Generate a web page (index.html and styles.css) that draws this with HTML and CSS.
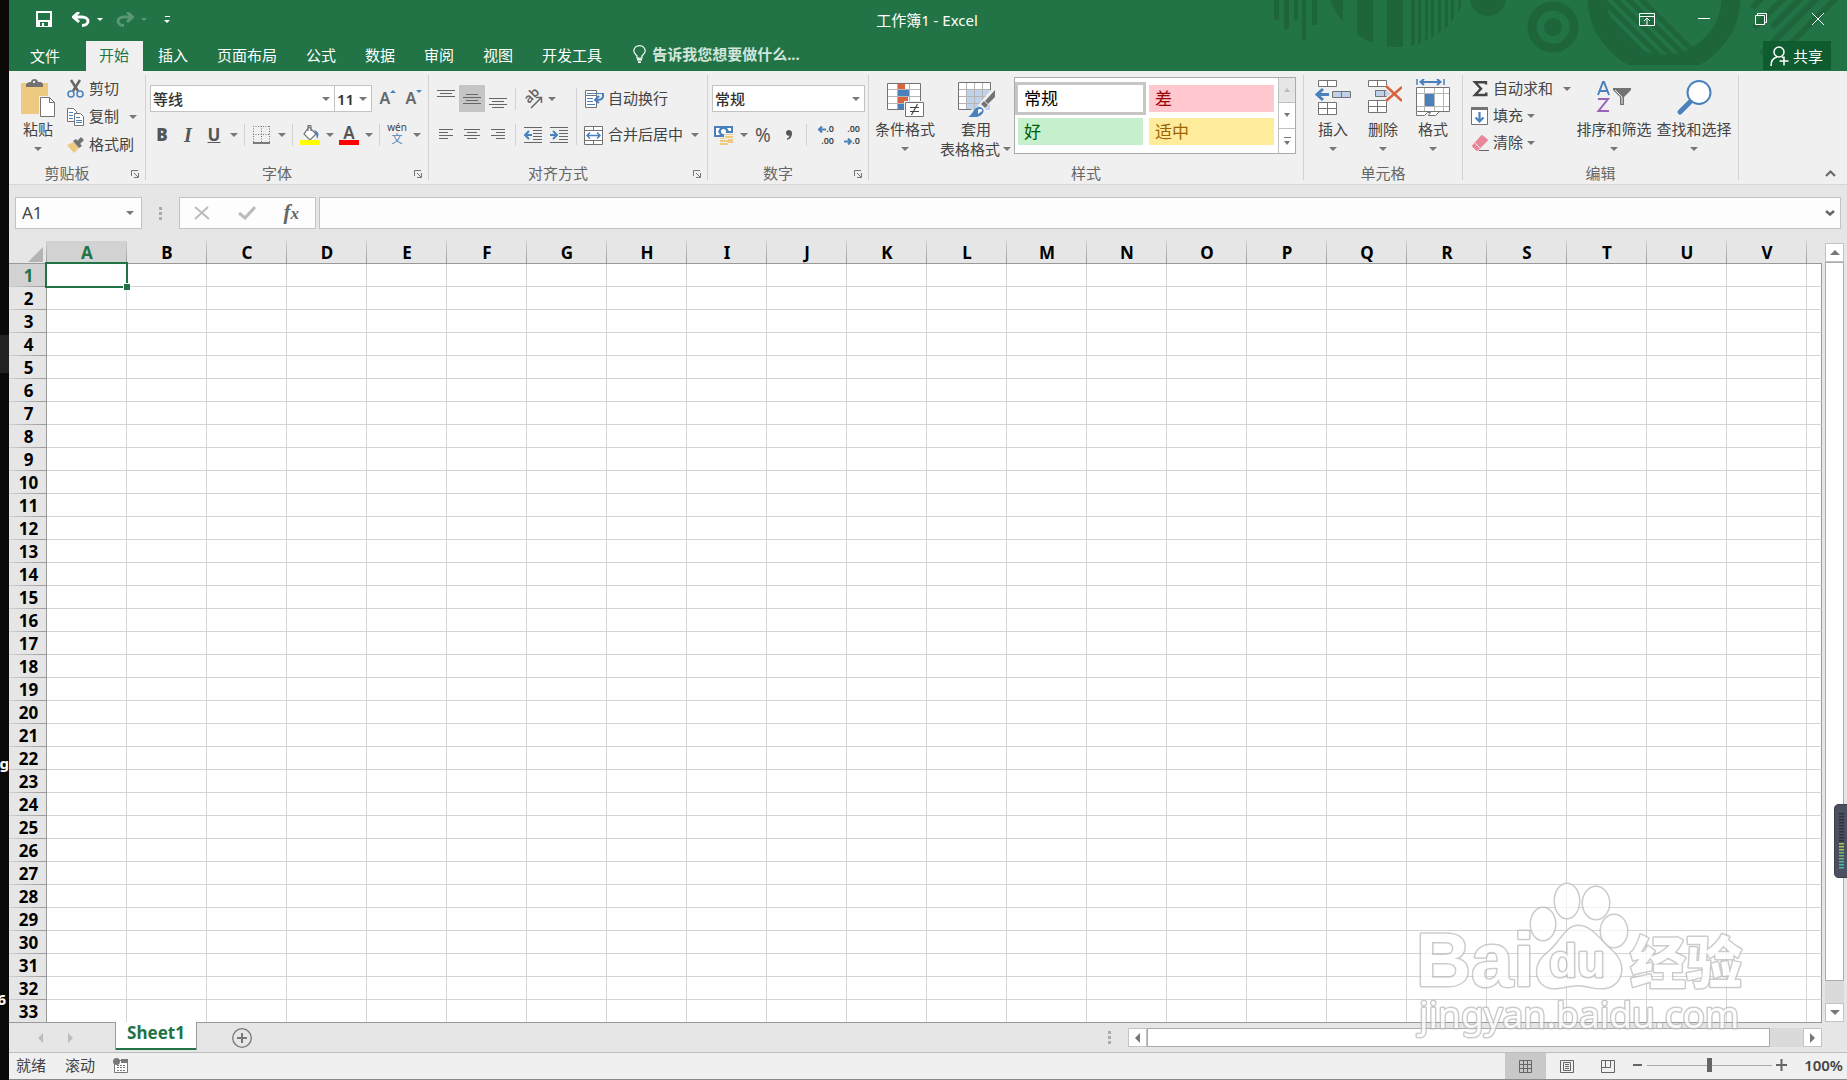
FILE: index.html
```html
<!DOCTYPE html>
<html lang="zh-CN">
<head>
<meta charset="utf-8">
<title>工作簿1 - Excel</title>
<link rel="stylesheet" href="styles.css">
</head>
<body>
<div class="desktop" aria-hidden="true">
  <span class="desktop-block"></span>
  <span class="desktop-char char-g">g</span>
  <span class="desktop-char char-6">6</span>
</div>
<div class="app">
  <header class="header">
    <svg class="deco" width="577" height="71" viewBox="1270 0 577 71" fill="#1e653c" aria-hidden="true">
      <defs>
        <clipPath id="disc"><circle cx="1397" cy="-24" r="71"/></clipPath>
        <clipPath id="inner"><circle cx="1664" cy="-3" r="60"/></clipPath>
        <clipPath id="flat"><rect x="1580" y="0" width="170" height="65"/></clipPath>
      </defs>
      <path d="M1274 0h5v20h-5zM1284 0h5v29h-5zM1294 0h4v20h-4zM1302 0h4v40h-4zM1312 0h5v25h-5z"/>
      <path clip-path="url(#disc)" d="M1328 0h15v48h-15zM1357 0h16v48h-16zM1387 0h16v48h-16zM1411 0h4v48h-4zM1418 0h3v48h-3zM1425 0h3v48h-3zM1431 0h3v48h-3zM1438 0h3v48h-3zM1445 0h3v48h-3zM1451 0h3v48h-3zM1458 0h3v48h-3z"/>
      <circle cx="1488" cy="-2" r="18"/>
      <circle cx="1553" cy="27" r="21" fill="none" stroke="#1e653c" stroke-width="9"/>
      <circle cx="1553" cy="27" r="9"/>
      <circle clip-path="url(#flat)" cx="1664" cy="-3" r="67" fill="none" stroke="#1e653c" stroke-width="19"/>
      <path clip-path="url(#inner)" fill="none" stroke="#1e653c" stroke-width="5" d="M1585 -5l70 70M1598 -5l70 70M1611 -5l70 70M1624 -5l70 70M1637 -5l70 70"/>
      <path fill="none" stroke="#1e653c" stroke-width="6" d="M1752 8l14-14M1754 28l34-34M1772 27l33-33M1761 54l62-62M1781 53l62-62"/>
    </svg>
    <div class="titlebar">
      <div class="qat">
        <button class="qat-btn save" aria-label="保存"><svg width="16" height="16" viewBox="0 0 16 16"><path fill="#fff" fill-rule="evenodd" d="M0 0h16v16H0zM2 2v7h12V2zM4 11v4h2v-3h2v3h4v-4z"/></svg></button>
        <button class="qat-btn undo" aria-label="撤消"><svg width="18" height="15" viewBox="0 0 18 15"><path d="M7 0L1.500 5 7 10M2 5h8c8 0 8 8.500 0 8.500" fill="none" stroke="#fff" stroke-width="3"/></svg><i class="caret"></i></button>
        <button class="qat-btn redo" aria-label="恢复"><svg width="18" height="15" viewBox="0 0 18 15"><path d="M11 0l5.500 5-5.500 5M16 5H8C0 5 0 13.500 8 13.500" fill="none" stroke="#fff" stroke-width="3"/></svg><i class="caret"></i></button>
        <button class="qat-btn more" aria-label="自定义快速访问工具栏"><i class="caret"></i></button>
      </div>
      <div class="title">工作簿1 - Excel</div>
      <div class="win-buttons">
        <button aria-label="功能区显示选项"><svg width="16" height="13" viewBox="0 0 16 13" fill="none" stroke="#fff"><path d="M.5.5h15v12H.5zM0 3.500h16M8 12V5M5 8l3-3 3 3"/></svg></button>
        <button aria-label="最小化"><svg width="12" height="12" viewBox="0 0 12 12" stroke="#fff"><path d="M0 5.500h12"/></svg></button>
        <button aria-label="向下还原"><svg width="12" height="12" viewBox="0 0 12 12" fill="none" stroke="#fff"><path d="M.5 2.500h9v9h-9zM2.500 2V.5h9v9H10"/></svg></button>
        <button aria-label="关闭"><svg width="12" height="12" viewBox="0 0 12 12" stroke="#fff"><path d="M0 0l12 12M12 0L0 12"/></svg></button>
      </div>
    </div>
    <nav class="tabs">
      <button class="tab file">文件</button>
      <button class="tab active">开始</button>
      <button class="tab">插入</button>
      <button class="tab">页面布局</button>
      <button class="tab">公式</button>
      <button class="tab">数据</button>
      <button class="tab">审阅</button>
      <button class="tab">视图</button>
      <button class="tab">开发工具</button>
      <button class="tell-me"><svg width="13" height="18" viewBox="0 0 13 18" fill="none" stroke="#fff"><path stroke-width="1.200" d="M4 13V11C2 9 .8 8 .8 5.800a5.700 5.200 0 0 1 11.400 0C12.200 8 11 9 9 11v2z"/><path stroke-width="2" d="M4 14.500h5M5 17.300h3"/></svg><span>告诉我您想要做什么...</span></button>
      <button class="share"><svg width="19" height="20" viewBox="0 0 19 20" fill="none" stroke="#fff" stroke-width="1.500"><circle cx="9" cy="6" r="5"/><path d="M1 20c0-5 2-8 6-9M12 11l2 1M9.500 15h9M14 10.500v9"/></svg><span>共享</span></button>
    </nav>
  </header>

  <section class="ribbon">
    <div class="group g-clip">
      <div class="body">
        <button class="big"><svg class="ico" width="36" height="38" viewBox="0 0 36 38"><path fill="#eec981" d="M1 4h27v31H1z"/><path fill="#737373" d="M6 8V5l3-2h2c0-4 7-4 7 0h3l2 2v3z"/><path fill="#f0f0f0" d="M13 2h2v2h-2z"/><path fill="#fff" stroke="#f0f0f0" stroke-width="3" d="M20.500 18.500h9l5 5v14h-14z"/><path fill="#fff" stroke="#737373" d="M20.500 18.500h9l5 5v14h-14zM29.500 18.500v5h5"/></svg><span>粘贴</span><i class="caret"></i></button>
        <div class="list">
          <button><svg width="18" height="20" viewBox="0 0 18 20" fill="none"><path stroke="#666" stroke-width="2.500" d="M4 1l7 11M13 1L6 12"/><g stroke="#4a80bb" stroke-width="1.500"><circle cx="4" cy="15" r="3"/><circle cx="13" cy="15" r="3"/></g></svg><span>剪切</span></button>
          <button class="far"><svg width="18" height="20" viewBox="0 0 18 20" fill="#fff" stroke="#737373"><path d="M.5 1.500h6l3 3v10h-9z"/><path d="M7.500 6.500h6l3 3v9h-9z"/><path stroke="#4a80bb" d="M2 5.500h4M2 8.500h4M2 11.500h4M9 10.500h4M9 13.500h6M9 15.500h6"/></svg><span>复制</span><i class="caret"></i></button>
          <button><svg width="18" height="18" viewBox="0 0 18 18"><path fill="#eec981" d="M0 9l7-3 5 6-5 5z"/><path fill="#737373" d="M6 5l3-2 6 7-3 2zM10 5l4-4 3 3-4 4z"/></svg><span>格式刷</span></button>
        </div>
      </div>
      <div class="caption"><span>剪贴板</span><button class="launch" aria-label="剪贴板设置"><svg width="8" height="8" viewBox="0 0 8 8" fill="none" stroke="#777"><path d="M.5 6V.5H7M3 3l4 4M7.500 3v4.500H3"/></svg></button></div>
    </div>
    <span class="vsep"></span>

    <div class="group g-font">
      <div class="body rows">
        <div class="row top">
          <label class="combo font-name"><select aria-label="字体"><option>等线</option></select><i class="caret"></i></label><label class="combo font-size"><select aria-label="字号"><option>11</option></select><i class="caret"></i></label>
          <button class="tool sizer" aria-label="增大字号"><span>A</span><svg width="6" height="3" viewBox="0 0 6 3"><path fill="#4a80bb" d="M0 3l3-3 3 3z"/></svg></button>
          <button class="tool sizer" aria-label="减小字号"><span>A</span><svg width="6" height="3" viewBox="0 0 6 3"><path fill="#4a80bb" d="M0 0h6L3 3z"/></svg></button>
        </div>
        <div class="row tools">
          <button class="tool letter"><b>B</b></button>
          <button class="tool letter italic"><i>I</i></button>
          <button class="tool letter"><u>U</u></button>
          <button class="drop" aria-label="下划线"><i class="caret"></i></button>
          <span class="sep"></span>
          <button class="tool" aria-label="边框"><svg width="18" height="18" viewBox="0 0 18 18" fill="none" stroke="#777"><path stroke-dasharray="1 1.500" d="M.5 0v16M8.500 0v16M16.500 0v16M0 .5h17M0 8.500h17"/><path d="M0 17h17" stroke-width="1.500" stroke="#555"/></svg></button>
          <button class="drop" aria-label="边框选项"><i class="caret"></i></button>
          <span class="sep"></span>
          <button class="tool" aria-label="填充颜色"><svg width="20" height="20" viewBox="0 0 20 20"><path fill="#fff" stroke="#737373" stroke-width="1.200" d="M9 2l7 7-6 6-6-6zM8 6V1c0-1 3-1 3 0v5"/><path fill="#4a80bb" d="M14 5c4 1 6 4 3 9l-1-5z"/><path fill="#ff0" d="M0 15h20v5H0z"/></svg></button>
          <button class="drop" aria-label="填充颜色选项"><i class="caret"></i></button>
          <button class="tool color-a" aria-label="字体颜色"><span>A</span></button>
          <button class="drop" aria-label="字体颜色选项"><i class="caret"></i></button>
          <span class="sep"></span>
          <button class="tool pinyin"><span>wén</span><em>文</em></button>
          <button class="drop" aria-label="拼音选项"><i class="caret"></i></button>
        </div>
      </div>
      <div class="caption"><span>字体</span><button class="launch" aria-label="字体设置"><svg width="8" height="8" viewBox="0 0 8 8" fill="none" stroke="#777"><path d="M.5 6V.5H7M3 3l4 4M7.500 3v4.500H3"/></svg></button></div>
    </div>
    <span class="vsep"></span>

    <div class="group g-align">
      <div class="body">
        <div class="rows">
          <div class="row top wide">
            <button class="tool" aria-label="顶端对齐"><svg width="18" height="18" viewBox="0 0 18 18" stroke="#666"><path d="M0 .5h18M3 3.500h12M0 6.500h18"/></svg></button>
            <button class="tool on" aria-label="垂直居中"><svg width="18" height="18" viewBox="0 0 18 18" stroke="#666"><path d="M3 4.500h12M0 7.500h18M3 10.500h12M0 13.500h18"/></svg></button>
            <button class="tool" aria-label="底端对齐"><svg width="18" height="18" viewBox="0 0 18 18" stroke="#666"><path d="M0 8.500h18M3 11.500h12M0 14.500h18M3 17.500h12"/></svg></button>
            <span class="sep"></span>
            <button class="tool" aria-label="方向"><svg width="20" height="20" viewBox="0 0 20 20"><text class="ab" transform="translate(6 15) rotate(-45)">ab</text><path fill="none" stroke="#666" stroke-width="1.500" d="M8 19L18 9M13 8.500h5.500V14"/></svg></button>
            <button class="drop" aria-label="方向选项"><i class="caret"></i></button>
          </div>
          <div class="row tools wide">
            <button class="tool" aria-label="左对齐"><svg width="16" height="12" viewBox="0 0 16 12" stroke="#666"><path d="M1 .5h14M1 3.500h9M1 6.500h14M1 9.500h9"/></svg></button>
            <button class="tool" aria-label="居中"><svg width="16" height="12" viewBox="0 0 16 12" stroke="#666"><path d="M0 .5h16M3 3.500h10M0 6.500h16M3 9.500h10"/></svg></button>
            <button class="tool" aria-label="右对齐"><svg width="16" height="12" viewBox="0 0 16 12" stroke="#666"><path d="M1 .5h14M6 3.500h9M1 6.500h14M6 9.500h9"/></svg></button>
            <span class="sep"></span>
            <button class="tool" aria-label="减少缩进量"><svg width="18" height="16" viewBox="0 0 18 16" stroke="#666" fill="none"><path d="M0 .5h18M9 3.500h9M9 6.500h9M9 9.500h9M9 12.500h9M0 15.500h18"/><path stroke="#4a80bb" stroke-width="2" d="M8 8H2M5 4L1 8l4 4"/></svg></button>
            <button class="tool" aria-label="增加缩进量"><svg width="18" height="16" viewBox="0 0 18 16" stroke="#666" fill="none"><path d="M0 .5h18M9 3.500h9M9 6.500h9M9 9.500h9M9 12.500h9M0 15.500h18"/><path stroke="#4a80bb" stroke-width="2" d="M0 8h7M3 4l4 4-4 4"/></svg></button>
          </div>
        </div>
        <span class="sep tall"></span>
        <div class="rows wraps">
          <button class="row top"><svg width="20" height="18" viewBox="0 0 20 18" fill="none"><path fill="#fff" stroke="#737373" d="M1.500 .5h11v5h-11zM1.500 5.500h11v12h-11z"/><path stroke="#4a80bb" d="M3 3.500h15M3 8.500h6M3 11.500h6M3 14.500h8"/><path stroke="#4a80bb" stroke-width="2" d="M19 3v3c0 3-2 4-6 4M15 6l-4 4 4 3"/></svg><span>自动换行</span></button>
          <button class="row tools"><svg width="20" height="19" viewBox="0 0 20 19" fill="none"><path fill="#fff" stroke="#737373" d="M.5.5h18v18H.5zM.5 4.500h18M.5 14.500h18M9.500 .5v4M9.500 14.500v4"/><path stroke="#4a80bb" stroke-width="1.500" d="M3 9.500h13M6 6.500l-3 3 3 3M13 6.500l3 3-3 3"/></svg><span>合并后居中</span><i class="caret"></i></button>
        </div>
      </div>
      <div class="caption"><span>对齐方式</span><button class="launch" aria-label="对齐设置"><svg width="8" height="8" viewBox="0 0 8 8" fill="none" stroke="#777"><path d="M.5 6V.5H7M3 3l4 4M7.500 3v4.500H3"/></svg></button></div>
    </div>
    <span class="vsep"></span>

    <div class="group g-num">
      <div class="body rows">
        <div class="row top"><label class="combo num-format"><select aria-label="数字格式"><option>常规</option></select><i class="caret"></i></label></div>
        <div class="row tools">
          <button class="tool" aria-label="会计数字格式"><svg width="20" height="20" viewBox="0 0 20 20"><path fill="#4a80bb" d="M0 1h19v11H0z"/><path fill="#fff" d="M2 3h4L4 6.500 6 10H2zM17 3h-4l2 3H17z"/><circle cx="9.500" cy="6.500" r="2.500" fill="#fff"/><path fill="#eec981" stroke="#f0f0f0" d="M10.500 8.500h9v10h-9z"/><path fill="#eec981" d="M6 13h8v7H6z"/><path stroke="#f0f0f0" d="M6 14.500h8M6 17.500h8M11 10.500h8M11 13.500h8"/></svg></button>
          <button class="drop" aria-label="会计格式选项"><i class="caret"></i></button>
          <button class="tool percent">%</button>
          <button class="tool" aria-label="千位分隔样式"><svg width="8" height="12" viewBox="0 0 8 12"><path fill="#555" d="M1 3.500C1 0 7 0 7 4c0 4-2 6-5 7V9.500c2-1 2.500-2 2.500-3C2.500 7 1 6 1 3.500z"/></svg></button>
          <span class="sep"></span>
          <button class="tool decimals" aria-label="增加小数位数"><span><svg width="8" height="7" viewBox="0 0 8 7"><path fill="none" stroke="#4a80bb" stroke-width="2" d="M8 3.500H2M4 .5l-3 3 3 3"/></svg>.0</span><span>.00</span></button>
          <button class="tool decimals" aria-label="减少小数位数"><span>.00</span><span><svg width="8" height="7" viewBox="0 0 8 7"><path fill="none" stroke="#4a80bb" stroke-width="2" d="M0 3.500h6M4 .5l3 3-3 3"/></svg>.0</span></button>
        </div>
      </div>
      <div class="caption"><span>数字</span><button class="launch" aria-label="数字设置"><svg width="8" height="8" viewBox="0 0 8 8" fill="none" stroke="#777"><path d="M.5 6V.5H7M3 3l4 4M7.500 3v4.500H3"/></svg></button></div>
    </div>
    <span class="vsep"></span>

    <div class="group g-style">
      <div class="body">
        <button class="big w72"><svg class="ico" width="38" height="38" viewBox="0 0 38 38"><path fill="#fff" d="M1 4h33v27H1z"/><path fill="#d9643f" d="M12 5h7v6h-7zM12 18h10v6H12z"/><path fill="#4a80bb" d="M12 11h11v7H12zM12 24h6v7h-6z"/><path fill="none" stroke="#b5b5b5" d="M11.500 4v27M23.500 4v20M1 10.500h33M1 17.500h33M1 24.500h33"/><path fill="none" stroke="#737373" d="M1.500 4.500h33v26h-33z"/><path fill="#fff" stroke="#f0f0f0" stroke-width="3" d="M19.500 23.500h18v14h-18z"/><path fill="#fff" stroke="#737373" d="M19.500 23.500h18v14h-18z"/><path stroke="#444" stroke-width="1.200" d="M24 28.500h9M24 32.500h9M31.500 25l-6 11"/></svg><span>条件格式</span><i class="caret"></i></button>
        <button class="big w70"><svg class="ico" width="38" height="38" viewBox="0 0 38 38"><path fill="#fff" d="M1 3h32v28H1z"/><path fill="#bfd2e9" d="M9 10h24v21H9z"/><path fill="none" stroke="#b5b5b5" d="M9.500 3v28M17.500 3v28M25.500 3v28M1 10.500h32M1 17.500h32M1 24.500h32"/><path fill="none" stroke="#737373" d="M33.500 12V3.500h-32v27H14"/><path stroke="#f0f0f0" stroke-width="8" d="M38 12L24 29"/><path fill="#737373" d="M38 11v7l-7 7-3-3zM27 22l4 4-3 3-4-4z"/><path fill="#4a80bb" d="M11 38c5-2 5-10 12-10 7 2 3 10-5 10z"/><path fill="#fff" d="M21 31c1-2 5-1 4 1l-4 3z"/></svg><span>套用</span><span class="line2">表格格式<i class="caret"></i></span></button>
        <div class="gallery">
          <div class="swatches">
            <button class="swatch normal">常规</button>
            <button class="swatch bad">差</button>
            <button class="swatch good">好</button>
            <button class="swatch neutral">适中</button>
          </div>
          <div class="gallery-nav">
            <button class="off" aria-label="上一行"><i class="caret up"></i></button>
            <button aria-label="下一行"><i class="caret"></i></button>
            <button class="expand" aria-label="其他样式"><i class="caret"></i></button>
          </div>
        </div>
      </div>
      <div class="caption plain"><span>样式</span></div>
    </div>
    <span class="vsep"></span>

    <div class="group g-cell">
      <div class="body">
        <button class="big w50"><svg class="ico" width="38" height="38" viewBox="0 0 38 38" fill="#fff" stroke="#737373"><path d="M4.500 1.500h18v6h-18zM13.500 1.500v6M4.500 23.500h18v12h-18zM13.500 23.500v12M4.500 29.500h18"/><path fill="#bfd2e9" d="M18.500 12.500h18v6h-18zM27.500 12.500v6"/><path fill="none" stroke="#4a80bb" stroke-width="3" d="M15 15.500H4M9 10l-6 5.500L9 21"/></svg><span>插入</span><i class="caret"></i></button>
        <button class="big w50"><svg class="ico" width="38" height="38" viewBox="0 0 38 38" fill="#fff" stroke="#737373"><path d="M4.500 1.500h18v6h-18zM13.500 1.500v6M4.500 21.500h18v12h-18zM13.500 21.500v12M4.500 27.500h18"/><path fill="#bfd2e9" d="M11.500 11.500h14v6h-14zM20.500 11.500v6"/><path stroke="#f0f0f0" stroke-width="6" d="M22 7l16 15M38 8L22 22"/><path fill="none" stroke="#d9643f" stroke-width="2.500" d="M22 7l16 15M38 8L22 22"/></svg><span>删除</span><i class="caret"></i></button>
        <button class="big w50"><svg class="ico" width="38" height="38" viewBox="0 0 38 38"><path fill="none" stroke="#4a80bb" stroke-width="1.500" d="M3 0v6M30 0v6"/><path fill="none" stroke="#4a80bb" stroke-width="2" d="M7 3h19M10 0L6.500 3 10 6M23 0l3.500 3L23 6"/><path fill="#fff" stroke="#737373" d="M2.500 32v4.500h8l3-3h3l-2 3h7l4-4"/><path fill="#fff" d="M2 9h34v24H2z"/><path fill="none" stroke="#b5b5b5" d="M10.500 9v24M20.500 9v24M29.500 9v24M3 14.500h33M3 27.500h33"/><path fill="#4a80bb" d="M11 15h9v12h-9z"/><path fill="none" stroke="#737373" d="M2.500 8.500h33v24h-33z"/></svg><span>格式</span><i class="caret"></i></button>
      </div>
      <div class="caption plain"><span>单元格</span></div>
    </div>
    <span class="vsep"></span>

    <div class="group g-edit">
      <div class="body">
        <div class="list">
          <button class="far"><svg width="18" height="18" viewBox="0 0 18 18"><path fill="none" stroke="#444" stroke-width="2.400" d="M15 4.500V2.200H4l6 6.500-6 6.300h11.300v-2.600"/></svg><span>自动求和</span><i class="caret"></i></button>
          <button><svg width="18" height="18" viewBox="0 0 18 18"><path fill="#fff" stroke="#737373" d="M.5.5h16v17H.5z"/><path fill="#737373" d="M0 0h17v3H0z"/><path fill="none" stroke="#4a80bb" stroke-width="2.200" d="M8.500 5v9M4.500 10.500l4 4 4-4"/></svg><span>填充</span><i class="caret"></i></button>
          <button><svg width="18" height="18" viewBox="0 0 18 18"><path fill="#e8879c" stroke="#e8879c" stroke-width="2" stroke-linejoin="round" d="M2 12L11 2l5 4L6 16z"/><path stroke="#f0f0f0" d="M4 9l5 5"/><path stroke="#666" d="M8 16.500h10"/></svg><span>清除</span><i class="caret"></i></button>
        </div>
        <button class="big w80"><svg class="ico" width="38" height="38" viewBox="0 0 38 38"><g fill="none" stroke-width="2"><path stroke="#4a80bb" d="M3 16L8 3h1l5 13M5 12h7"/><path stroke="#9a62b8" d="M3 20h10L3.500 32H14"/></g><path fill="#737373" d="M18 9h18v2l-7 7v8h-4v-8l-7-7z"/><path stroke="#f0f0f0" fill="none" d="M20 11l7 7v7"/></svg><span>排序和筛选</span><i class="caret"></i></button>
        <button class="big w80"><svg class="ico" width="38" height="38" viewBox="0 0 38 38"><path stroke="#4a80bb" stroke-width="5" stroke-linecap="round" d="M5 33l10-10"/><circle cx="24" cy="13.500" r="11.500" fill="#fff" stroke="#4a80bb" stroke-width="2"/></svg><span>查找和选择</span><i class="caret"></i></button>
      </div>
      <div class="caption plain"><span>编辑</span></div>
    </div>
    <span class="vsep"></span>
    <button class="collapse" aria-label="折叠功能区"><svg width="11" height="7" viewBox="0 0 11 7"><path fill="none" stroke="#666" stroke-width="2" d="M1 6l4.500-4.500L10 6"/></svg></button>
  </section>

  <section class="formula-bar">
    <div class="name-box"><input value="A1" aria-label="名称框"><i class="caret"></i></div>
    <span class="dots"></span>
    <div class="fx">
      <button aria-label="取消"><svg width="16" height="14" viewBox="0 0 16 14"><path stroke="#bbb" stroke-width="2" d="M1 1l14 12M14 1L1 13"/></svg></button>
      <button aria-label="输入"><svg width="18" height="14" viewBox="0 0 18 14"><path fill="none" stroke="#bbb" stroke-width="3" d="M1 7l6 5L17 1"/></svg></button>
      <button class="fx-label" aria-label="插入函数"><span>f</span><small>x</small></button>
    </div>
    <div class="formula"><input aria-label="编辑栏"><svg width="10" height="6" viewBox="0 0 10 6"><path fill="none" stroke="#666" stroke-width="2.500" d="M1 1l4 3.500L9 1"/></svg></div>
  </section>

  <main class="work">
    <div class="grid-wrap">
      <table class="grid" id="grid">
        <thead><tr><th class="corner"><svg width="15" height="15" viewBox="0 0 15 15"><path fill="#b4b4b4" d="M15 0v15H0z"/></svg></th></tr></thead>
        <tbody></tbody>
      </table>
    </div>
    <div class="vscroll">
      <button aria-label="向上滚动"><i class="tri up"></i></button>
      <div class="vtrack"><div class="vthumb"></div></div>
      <button aria-label="向下滚动"><i class="tri down"></i></button>
    </div>
  </main>

  <div class="sheetbar">
    <button class="nav-arrow" aria-label="上一张"><i class="tri left"></i></button>
    <button class="nav-arrow" aria-label="下一张"><i class="tri right"></i></button>
    <button class="sheet-tab">Sheet1</button>
    <button class="add-sheet" aria-label="新工作表"><svg width="20" height="20" viewBox="0 0 20 20" fill="none" stroke="#777"><circle cx="10" cy="10" r="9.300" stroke-width="1.300"/><path stroke-width="2" d="M5 10h10M10 5v10"/></svg></button>
    <span class="dots"></span>
    <div class="hscroll">
      <button aria-label="向左滚动"><i class="tri left"></i></button>
      <div class="htrack"><div class="hthumb"></div></div>
      <button aria-label="向右滚动"><i class="tri right"></i></button>
    </div>
  </div>

  <footer class="status">
    <span>就绪</span><span>滚动</span>
    <button class="macro" aria-label="录制宏"><svg width="16" height="15" viewBox="0 0 16 15"><path fill="#fff" stroke="#777" d="M1.500 2.500h13v12h-13z"/><path fill="#777" d="M8 1h7v4H8z"/><path stroke="#777" stroke-dasharray="2 1" d="M4 7.500h9M4 9.500h9M4 12.500h9"/><circle cx="3.500" cy="3.500" r="3.500" fill="#777"/></svg></button>
    <div class="views">
      <button class="on" aria-label="普通"><svg width="13" height="13" viewBox="0 0 13 13" fill="none" stroke="#666"><path d="M.5.5h12v12H.5zM4.500 0v13M8.500 0v13M0 4.500h13M0 8.500h13"/></svg></button>
      <button aria-label="页面布局"><svg width="14" height="13" viewBox="0 0 14 13" fill="none" stroke="#666"><path d="M.5.5h13v12H.5zM3.500 2.500h7v8h-7zM5 4.500h4M5 6.500h4M5 8.500h4"/></svg></button>
      <button aria-label="分页预览"><svg width="14" height="13" viewBox="0 0 14 13" fill="none" stroke="#666"><path d="M.5.5h13v12H.5zM4.500 0v7M0 7.500h9.500V0"/></svg></button>
    </div>
    <div class="zoom">
      <button aria-label="缩小"><svg width="12" height="12" viewBox="0 0 12 12"><path stroke="#666" stroke-width="2" d="M2 6h9"/></svg></button>
      <input type="range" min="0" max="100" value="50" aria-label="缩放">
      <button aria-label="放大"><svg width="12" height="12" viewBox="0 0 12 12"><path stroke="#666" stroke-width="2" d="M0 6h11M5.500 0v12"/></svg></button>
      <button class="level">100%</button>
    </div>
  </footer>
</div>

<svg class="watermark" width="340" height="170" viewBox="1412 878 340 170" aria-hidden="true">
  <g class="mark">
    <text class="bai" x="1416" y="986">Bai</text>
    <ellipse cx="1543" cy="924" rx="12" ry="16"/>
    <ellipse cx="1567" cy="901" rx="12" ry="17"/>
    <ellipse cx="1596" cy="903" rx="13" ry="16"/>
    <ellipse cx="1614" cy="931" rx="13" ry="16"/>
    <path d="M1578 926c-12 0-18 17-29 26-20 14-12 37 6 36 8 0 14-3 23-3s16 4 25 3c17 0 26-22 9-37-12-10-20-25-34-25z"/>
    <text class="du" x="1549" y="977">du</text>
    <text class="jy" x="1630" y="983">经验</text>
    <text class="url" x="1419" y="1028">jingyan.baidu.com</text>
  </g>
</svg>
<svg class="meter" width="13" height="74" viewBox="0 0 13 74" aria-hidden="true">
  <path fill="#4b5060" stroke="#3b3f4b" d="M18 .5H5Q.5.500.5 5v64q0 4.500 4.500 4.500h13z"/>
  <path stroke="#2f323c" stroke-width="5" stroke-dasharray="1.500 1.500" d="M7.500 9v30"/>
  <path stroke="#a9c455" stroke-width="5" stroke-dasharray="1.500 1.500" d="M7.500 39v9"/>
  <path stroke="#6cba72" stroke-width="5" stroke-dasharray="1.500 1.500" d="M7.500 48v9"/>
  <path stroke="#43bba8" stroke-width="5" stroke-dasharray="1.500 1.500" d="M7.500 57v9"/>
</svg>
<script src="app.js"></script>
</body>
</html>
```
FILE: styles.css
```css
* { box-sizing: border-box; }

body {
  margin: 0;
  display: flex;
  height: 100vh;
  overflow: hidden;
  font: 15px/20px "Noto Sans", "Noto Sans CJK SC", sans-serif;
  color: #444;
  background: #e6e6e6;
}

button, input, select { font: inherit; color: inherit; }
button { margin: 0; padding: 0; border: 0; background: none; white-space: nowrap; }
svg { display: block; flex: none; }

/* sliver of the desktop behind the window */
.desktop { position: relative; flex: none; width: 9px; overflow: hidden; background: #0b0908; }
.desktop-block { position: absolute; top: 335px; left: 0; width: 9px; height: 38px; background: #222; }
.desktop-char { position: absolute; right: 0; color: #fff; font-weight: 700; }
.char-g { top: 753px; }
.char-6 { top: 989px; right: 3px; }

.app { flex: 1; min-width: 0; display: flex; flex-direction: column; }

.caret {
  flex: none;
  display: inline-block;
  width: 0;
  height: 0;
  border: 4px solid transparent;
  border-top-color: #777;
  border-bottom: 0;
}
.caret.up { border-top: 0; border-bottom: 4px solid #bbb; }

/* title bar and tabs */
.header { position: relative; flex: none; height: 71px; background: #227447; color: #fff; }
.deco { position: absolute; top: 0; right: 0; }
.titlebar { position: relative; display: grid; grid-template-columns: 1fr auto 1fr; height: 41px; }
.qat { display: flex; height: 38px; padding-left: 27px; }
.qat-btn { display: flex; align-items: center; gap: 7px; }
.qat .caret { border-width: 3px 3px 0; border-top-color: #fff; }
.save { width: 36px; }
.undo, .redo { width: 44px; }
.redo { opacity: .25; }
.more { flex-direction: column; justify-content: center; gap: 0; margin-left: 4px; }
.more::before { content: ""; width: 5px; height: 1px; margin-bottom: 3px; background: #fff; }
.title { line-height: 40px; margin-right: 2px; }
.win-buttons { display: flex; justify-content: flex-end; height: 38px; padding-right: 1px; }
.win-buttons button { display: flex; align-items: center; justify-content: center; width: 57px; }

.tabs { position: relative; display: flex; height: 30px; }
.tab { padding: 0 15px 2px 14px; }
.tab.file { width: 77px; padding: 0 0 0 21px; text-align: left; }
.tab.active { padding: 0 14px 2px 13px; background: #f0f0f0; color: #227447; margin-right: 1px; }
.tell-me { display: flex; align-items: center; gap: 6px; margin-left: 16px; padding-bottom: 4px; font-weight: 700; color: #d3e5da; }
.share { display: flex; align-items: center; gap: 4px; height: 29px; margin: 0 16px 0 auto; padding: 0 8px 0 7px; background: #0e5c2f; }

/* ribbon */
.ribbon {
  flex: none;
  display: flex;
  align-items: flex-start;
  height: 114px;
  padding-top: 4px;
  background: #f0f0f0;
  border-bottom: 1px solid #d5d5d5;
}
.vsep { flex: none; width: 1px; height: 105px; background: #d2d2d2; }
.group { flex: none; display: flex; flex-direction: column; height: 109px; }
.g-clip { width: 136px; }
.g-font { width: 282px; }
.g-align { width: 278px; }
.g-num { width: 160px; }
.g-style { width: 434px; }
.g-cell { width: 158px; }
.g-edit { width: 275px; }
.body { flex: 1; display: flex; align-items: flex-start; }
.g-clip .body { gap: 10px; padding-left: 10px; }
.g-font .body, .g-align .body, .g-num .body, .g-cell .body { padding-left: 4px; }
.g-edit .body { padding-left: 8px; }

.caption { display: flex; height: 20px; line-height: 18px; color: #666; }
.caption span { flex: 1; text-align: center; }
.launch { display: flex; align-items: center; width: 20px; padding-left: 6px; }

.big { display: flex; flex-direction: column; align-items: center; width: 38px; }
.big .ico { margin: 4px 0 2px; }
.big > .caret { margin-top: 8px; }
.line2 { display: flex; align-items: center; gap: 3px; margin-right: 1px; }
.w50 { width: 50px; }
.w70 { width: 70px; }
.w72 { width: 72px; }
.w80 { width: 80px; }

.list { display: flex; flex-direction: column; }
.list button { display: flex; align-items: center; gap: 4px; height: 28px; }
.list span, .wraps span { padding-bottom: 2px; }
.list .far .caret { margin-left: 6px; }
.g-edit .list { width: 103px; }
.g-edit .list button { height: 27px; }

.rows { display: flex; flex-direction: column; gap: 12px; }
.body.rows, .body .rows { padding-top: 10px; }
.row { display: flex; align-items: center; }
.row.top { height: 27px; }
.row.tools { height: 22px; gap: 2px; }
.row.wide { gap: 0; }
.tool { display: flex; align-items: center; justify-content: center; width: 24px; height: 100%; }
.wide .tool { width: 26px; }
.tool.on { background: #c5c5c5; }
.drop { display: flex; align-items: center; justify-content: center; width: 11px; height: 100%; }
.sep { flex: none; width: 1px; height: 22px; margin: 0 3px; background: #d2d2d2; }
.wide .sep { margin: 0 4px; }
.sep.tall { height: 57px; margin: 13px 7px 0 4px; }
.body .wraps .row { gap: 4px; }
.wraps .caret { margin-left: 4px; }

.combo {
  display: flex;
  align-items: center;
  height: 27px;
  padding-right: 4px;
  background: #fff;
  border: 1px solid #c3c3c3;
}
.combo select {
  flex: 1;
  min-width: 0;
  height: 25px;
  padding: 0 2px;
  border: 0;
  background: none;
  appearance: none;
  font-weight: 500;
  color: #333;
}
.font-name { width: 185px; }
.font-size { width: 38px; margin-left: -1px; }
.font-size select { font-weight: 600; }
.num-format { width: 153px; }

.sizer { margin-left: 2px; padding-left: 4px; font: 600 16px/27px "Noto Sans", sans-serif; color: #666; }
.sizer svg { margin-bottom: 15px; }
.letter { font: 700 17px/22px "Noto Sans", sans-serif; color: #555; }
.letter.italic { font-family: "Liberation Serif", serif; font-size: 20px; }
.color-a { font: 600 17px/17px "Noto Sans", sans-serif; color: #555; }
.color-a span { width: 20px; height: 20px; border-bottom: 5px solid #f00; line-height: 15px; }
.pinyin { flex-direction: column; font-size: 10px; line-height: 8px; }
.pinyin em { font-size: 11px; line-height: 16px; font-style: normal; color: #4a80bb; }
.ab { font: 600 13px "Noto Sans", sans-serif; fill: #666; }
.percent { font-size: 19px; color: #555; }
.decimals { flex-direction: column; align-items: flex-end; font-size: 9px; line-height: 12px; font-weight: 600; padding-right: 2px; }
.decimals span { display: flex; align-items: center; }

.gallery { display: flex; width: 282px; height: 77px; margin: 2px 0 0 3px; background: #fff; border: 1px solid #ababab; }
.swatches { flex: 1; display: grid; grid-template-columns: 125px 125px; grid-template-rows: 27px 27px; gap: 6px; padding: 7px 0 0 3px; }
.swatch { padding-left: 6px; text-align: left; font-size: 17px; line-height: 25px; }
.normal { color: #000; outline: 3px solid #c6c6c6; }
.bad { background: #ffc7ce; color: #9c0006; }
.good { background: #c6efce; color: #006100; }
.neutral { background: #ffeb9c; color: #9c6500; }
.gallery-nav { display: flex; flex-direction: column; width: 17px; border-left: 1px solid #c0c0c0; }
.gallery-nav button { flex: 1; display: flex; flex-direction: column; align-items: center; justify-content: center; }
.gallery-nav .caret { border-left-width: 3px; border-right-width: 3px; }
.gallery-nav button + button { border-top: 1px solid #c0c0c0; }
.gallery-nav .off { background: #e6e6e6; }
.expand::before { content: ""; width: 7px; height: 1px; margin-bottom: 3px; background: #777; }
.collapse { align-self: flex-end; margin: 0 11px 7px auto; }

/* formula bar */
.formula-bar { flex: none; display: flex; padding: 12px 6px; height: 56px; }
.name-box, .fx, .formula { display: flex; align-items: center; background: #fdfdfd; border: 1px solid #c3c3c3; }
.name-box { width: 127px; padding-right: 7px; }
.name-box input { flex: 1; min-width: 0; padding: 0 6px; border: 0; background: none; font-size: 17px; }
.dots { flex: none; width: 3px; height: 13px; align-self: center; background: repeating-linear-gradient(#aaa 0 3px, transparent 3px 5px); }
.formula-bar .dots { margin: 0 17px; }
.fx { width: 137px; justify-content: space-between; padding: 0 16px 0 14px; margin-right: 3px; }
.fx-label { font: italic 700 21px/24px "Liberation Serif", serif; color: #666; }
.fx-label small { font-size: 17px; }
.formula { flex: 1; padding-right: 5px; }
.formula input { flex: 1; min-width: 0; border: 0; background: none; }

/* worksheet */
.work { flex: 1; min-height: 0; display: flex; }
.grid-wrap { flex: 1; min-width: 0; overflow: hidden; }
.grid { width: 100%; table-layout: fixed; border-collapse: separate; border-spacing: 0; background: #fff; font: 700 17px/20px "Noto Sans", sans-serif; color: #000; }
.grid th, .grid td { height: 23px; padding: 0; }
.grid thead th { width: 80px; padding-top: 2px; border-bottom: 1px solid #999; background: linear-gradient(#d0d0d0, #999) right / 1px 100% no-repeat #e6e6e6; }
.grid thead .corner { width: 38px; }
.corner svg { margin: 2px 0 0 19px; }
.grid thead .rest { width: auto; background: #e6e6e6; }
.grid tbody th { padding-left: 2px; border-right: 1px solid #999; background: linear-gradient(90deg, #d0d0d0, #999) bottom / 100% 1px no-repeat #e6e6e6; }
.grid td { border: solid #d4d4d4; border-width: 0 1px 1px 0; }
.grid td:last-child { border-right-color: #999; }
.grid thead .picked, .grid tbody .picked { background-color: #d2d2d2; color: #227447; }
.grid td.current { position: relative; }
.current::before { content: ""; position: absolute; inset: -2px; border: 2px solid #217346; }
.current::after { content: ""; position: absolute; right: -4px; bottom: -4px; width: 6px; height: 6px; background: #217346; border: solid #fff; border-width: 1px 0 0 1px; }

.tri { width: 0; height: 0; border: 5px solid transparent; }
.tri.up { border-top: 0; border-bottom-color: #777; }
.tri.down { border-bottom: 0; border-top-color: #777; }
.tri.left { border-left: 0; border-right-color: #777; }
.tri.right { border-right: 0; border-left-color: #777; }

.vscroll { flex: none; display: flex; flex-direction: column; width: 25px; padding: 2px 3px 0; }
.vscroll button, .hscroll button { flex: none; display: flex; align-items: center; justify-content: center; width: 19px; height: 19px; background: #fff; border: 1px solid #c3c3c3; }
.vtrack { flex: 1; background: #dadada; }
.vthumb { height: 97%; background: #fff; border: 1px solid #ababab; }

.sheetbar { flex: none; display: flex; height: 30px; margin-right: 25px; border-top: 1px solid #999; }
.nav-arrow { width: 30px; display: flex; align-items: center; justify-content: center; }
.nav-arrow:first-child { margin-left: 16px; }
.nav-arrow .left { border-right-color: #bcbcbc; }
.nav-arrow .right { border-left-color: #bcbcbc; }
.sheet-tab { width: 82px; height: 28px; margin: -1px 35px 0 30px; padding-bottom: 6px; background: #fff; border: solid #999; border-width: 0 1px; box-shadow: inset 0 -2px #217346; color: #217346; font-weight: 700; font-size: 17px; }
.add-sheet { display: flex; align-items: center; }
.sheetbar .dots { margin: 0 17px 0 auto; }
.hscroll { flex: 0 1 694px; display: flex; padding-top: 5px; }
.htrack { flex: 1; height: 19px; background: #dadada; }
.hthumb { width: 95%; height: 19px; background: #fff; border: 1px solid #ababab; }

/* status bar */
.status { flex: none; display: flex; align-items: center; gap: 19px; height: 28px; padding: 0 0 2px 7px; background: #f0f0f0; border-top: 1px solid #bdbdbd; border-bottom: 1px solid #8a8a8a; }
.macro { margin-left: -1px; }
.views { display: flex; height: 26px; margin: 0 0 -2px auto; }
.views button { display: flex; align-items: center; justify-content: center; width: 41px; }
.views .on { background: #c8c8c8; }
.zoom { display: flex; align-items: center; gap: 4px; margin-left: -16px; padding-right: 4px; }
.zoom input { width: 125px; height: 16px; margin: 0; background: none; appearance: none; }
.zoom input::-webkit-slider-runnable-track { height: 14px; background: linear-gradient(#aaa, #aaa) center / 100% 1px no-repeat; }
.zoom input::-webkit-slider-thumb { appearance: none; width: 5px; height: 14px; background: #666; }
.level { margin-left: 12px; font-weight: 600; }

/* overlays */
.watermark { position: fixed; right: 95px; bottom: 32px; pointer-events: none; }
.mark { fill: #fff; stroke: #bbb; stroke-width: 3px; paint-order: stroke; stroke-linejoin: round; opacity: .75; }
.bai { font: 700 76px "Liberation Sans", sans-serif; }
.du { font: 700 46px "Liberation Sans", sans-serif; }
.jy { font: 900 56px "Noto Sans CJK SC", sans-serif; }
.url { font: 400 37px "Noto Sans", sans-serif; }
.meter { position: fixed; right: 0; top: 804px; }
```
FILE: app.js
```js
// Fill the worksheet with lettered columns and numbered rows.
const COLUMNS = 22;
const ROWS = 33;
const grid = document.getElementById('grid');
const head = grid.tHead.rows[0];

for (let c = 0; c <= COLUMNS; c++) {
  const th = document.createElement('th');
  if (c < COLUMNS) th.textContent = String.fromCharCode(65 + c);
  else th.className = 'rest';
  if (c === 0) th.className = 'picked';
  head.append(th);
}

for (let r = 1; r <= ROWS; r++) {
  const row = grid.tBodies[0].insertRow();
  const th = document.createElement('th');
  th.textContent = r;
  if (r === 1) th.className = 'picked';
  row.append(th);
  for (let c = 0; c <= COLUMNS; c++) row.insertCell();
  if (r === 1) row.cells[1].className = 'current';
}
```
